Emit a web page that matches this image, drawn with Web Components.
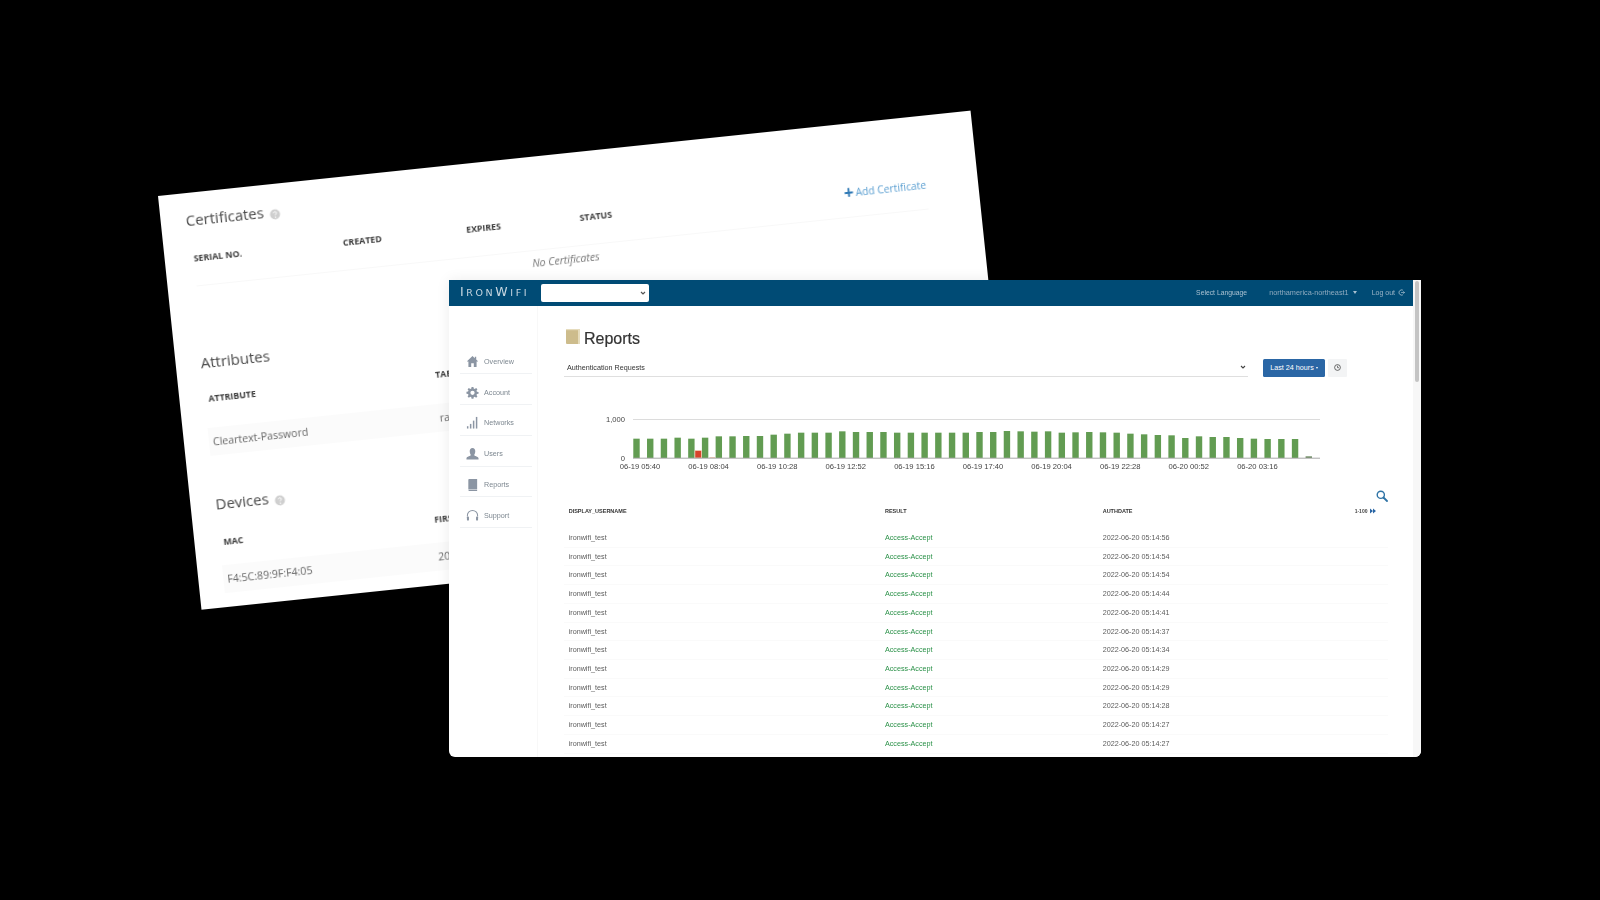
<!doctype html>
<html lang="en"><head><meta charset="utf-8"><title>IronWifi</title>
<style>html,body{margin:0;background:#000;height:100%;overflow:hidden}</style>
</head><body>
<promo-stage>
  <cert-card></cert-card>
  <app-window>
    <app-header slot="top"></app-header>
    <side-nav slot="side"></side-nav>
    <reports-page slot="main"></reports-page>
  </app-window>
</promo-stage>
<script>
const el=(name,css,html,connect)=>{customElements.define(name,class extends HTMLElement{constructor(){super();this.attachShadow({mode:'open'}).innerHTML=`<style>${css}</style>${typeof html==='function'?html():html}`;}connectedCallback(){if(connect)connect.call(this);}});};

el('promo-stage',`:host{display:block;position:relative;width:1600px;height:900px;background:#000;overflow:hidden}`,`<slot></slot>`);

const help=`<svg class="help" width="11" height="11" viewBox="0 0 11 11"><circle cx="5.5" cy="5.5" r="5" fill="#cfcfcf"/><path d="M4 4.300c.1-1 .8-1.500 1.600-1.500s1.500.6 1.500 1.300c0 1-1.400 1-1.400 2.200" fill="none" stroke="#fff" stroke-width="1"/><circle cx="5.700" cy="8.200" r=".7" fill="#fff"/></svg>`;
el('cert-card',`
:host{display:block;position:absolute;left:158px;top:196px;width:817px;height:416px;background:#fff;transform:rotate(-6deg);transform-origin:0 0;filter:blur(.45px);font-family:"Open Sans","Liberation Sans",sans-serif;color:#666;overflow:hidden;box-sizing:border-box;padding:16px 52px 0 25px}
h2{margin:0;font-size:15px;font-weight:400;line-height:22px;color:#484848;display:flex;align-items:center;gap:6px}
.help{flex:none;position:relative;top:3px}
.th{font-size:8.800px;font-weight:700;color:#3c3c3c;line-height:14px;text-transform:uppercase;white-space:nowrap}
.grid{display:grid;padding-left:4px}
.cert{grid-template-columns:150px 124px 114px 1fr;margin-top:21px;align-items:end}
.add{justify-self:end;font-size:10.300px;line-height:14px;color:#5b9fd1;position:relative;top:3px;display:flex;align-items:center;gap:2px}
.add b{font-size:17px;font-weight:700;color:#2f79b5;line-height:10px}
.rule{height:1px;background:#f8f8f8;margin:20px 0 0 4px}
.none{font-size:10.500px;font-style:italic;text-align:center;color:#777;line-height:14px;margin-top:5px;padding-left:8px}
.attr{grid-template-columns:228px 1fr;margin-top:19px}
.dev{grid-template-columns:212px 1fr;margin-top:21px}
.row{font-size:10.600px;line-height:28px;background:#fbfbfb;white-space:nowrap}
.s2{margin-top:46px}
.s3{margin-top:37px}
`,`
<h2>Certificates ${help}</h2>
<div class="grid cert"><div class="th">Serial No.</div><div class="th">Created</div><div class="th">Expires</div><div class="th" style="display:flex;justify-content:space-between"><span>Status</span><span class="add" style="text-transform:none;font-weight:400"><b>+</b>Add Certificate</span></div></div>
<div class="rule"></div>
<div class="none">No Certificates</div>
<h2 class="s2">Attributes</h2>
<div class="grid attr"><div class="th">Attribute</div><div class="th">Table</div></div>
<div class="grid attr row" style="margin-top:22px"><span>Cleartext-Password</span><span>radius</span></div>
<h2 class="s3">Devices ${help}</h2>
<div class="grid dev"><div class="th">MAC</div><div class="th">First Seen</div></div>
<div class="grid dev row" style="margin-top:16px"><span>F4:5C:89:9F:F4:05</span><span>2022-06-20</span></div>
`);

el('app-window',`
:host{display:flex;position:absolute;left:449px;top:279.500px;width:972px;height:477px;background:#fff;border-radius:0 0 6px 6px;overflow:hidden;font-family:"Liberation Sans",Arial,sans-serif;filter:blur(.4px);box-shadow:0 0 14px rgba(0,0,0,.08)}
.content{flex:1;min-width:0;display:flex;flex-direction:column}
.body{flex:1;display:flex;min-height:0}
.bar{width:8px;background:#f7f7f7;flex:none;padding:1px 2px;box-sizing:border-box}
.bar i{display:block;height:101px;background:#c4c4c4;border-radius:2px}
`,`<div class="content"><slot name="top"></slot><div class="body"><slot name="side"></slot><slot name="main"></slot></div></div><div class="bar"><i></i></div>`);

el('app-header',`
:host{display:flex;align-items:center;height:26.500px;background:#004b75;color:#a9c1d1;font-size:7px;padding:0 8px 0 11px;box-sizing:border-box;flex:none}
.logo{font-family:"DejaVu Sans","Liberation Sans",sans-serif;font-size:9.500px;letter-spacing:2.600px;color:#c9d8e2;width:81px;white-space:nowrap;line-height:1;position:relative;top:-.5px}
.logo b{font-size:12.500px;font-weight:400}
.sel{width:108px;height:17.500px;background:#fff;border-radius:2px;display:flex;align-items:center;justify-content:flex-end;padding-right:3px;box-sizing:border-box}
.sp{flex:1}
.lang{margin-right:22px;font-size:6.800px}
.reg{display:flex;align-items:center;gap:4px;margin-right:15px;font-size:7.300px;color:#8fabbf;position:relative;top:-.5px}
.reg i{width:0;height:0;border:2.500px solid transparent;border-top:3px solid #a9c1d1;border-bottom:0}
.out{display:flex;align-items:center;gap:3px;color:#9bb5c7;position:relative;top:-.5px}
`,`<span class="logo"><b>I</b>RON<b>W</b>IFI</span><span class="sel"><svg width="6" height="4" viewBox="0 0 6 4"><path d="M1 1l2 2 2-2" fill="none" stroke="#555" stroke-width="1.200"/></svg></span><span class="sp"></span>
<span class="lang">Select Language</span><span class="reg">northamerica-northeast1<i></i></span>
<span class="out">Log out<svg width="7" height="7" viewBox="0 0 8 8"><path d="M5.500 1.300A3 3 0 1 0 5.500 6.700" fill="none" stroke="#a9c1d1" stroke-width="1"/><path d="M3.500 4H7.500M6 2.700L7.500 4 6 5.300" fill="none" stroke="#a9c1d1" stroke-width=".8"/></svg></span>`);

const icons={
home:`<path d="M7 1L.8 7h1.800v6h3V9h2.800v4h3V7h1.800L11 4.800V2H9.500v1.400z"/>`,
gear:`<path fill-rule="evenodd" d="M6 1h2l.3 1.700 1.100.5L10.900 2.200 12.300 3.600 11.300 5l.5 1.100 1.700.3v2l-1.700.3-.5 1.100 1 1.500-1.400 1.400-1.500-1-1.100.5L8 13.800H6l-.3-1.700-1.100-.5-1.500 1-1.400-1.400 1-1.500-.5-1.100L.5 8.300v-2l1.700-.3.5-1.100-1-1.400L3.100 2.200l1.500 1 1.100-.5zM7 5A2.300 2.300 0 1 0 7 9.600 2.300 2.300 0 0 0 7 5z"/>`,
bars:`<rect x="1" y="11" width="1.600" height="2.500"/><rect x="4.200" y="8.500" width="1.600" height="5"/><rect x="7.400" y="5" width="1.600" height="8.500"/><rect x="10.600" y="1" width="1.600" height="12.500"/>`,
user:`<path d="M7 1c2 0 3 1.500 3 3.500S9 8 8.800 8.600c0 1 4.200 1.500 4.700 3.400v1.500H.5V12c.5-1.900 4.700-2.400 4.700-3.400C5 8 4 6.500 4 4.500S5 1 7 1z"/>`,
book:`<path d="M2.500 2C2.500 1.300 3 1 3.600 1H12v10.800H3.600c-.6 0-1.100.1-1.100 0zM2.500 12.300h9.500V14H3.600c-.6 0-1.100-.4-1.100-1z"/>`,
head:`<path d="M1.500 8V7a5.500 5.500 0 0 1 11 0v1" fill="none" stroke="#8b95a3" stroke-width="1.100"/><rect x="1" y="8" width="2.200" height="4.500" rx="1"/><rect x="10.800" y="8" width="2.200" height="4.500" rx="1"/>`};
el('nav-item',`
:host{display:flex;align-items:center;height:30.800px;box-sizing:border-box;border-bottom:1px solid #f0f2f4;font-size:7.200px;color:#7d8790;gap:5px;padding:6px 0 0 6px}
svg{width:13px;height:13px;fill:#8b95a3;flex:none}
`,`<svg viewBox="0 0 14 14"></svg><span id="t"></span>`,function(){const r=this.shadowRoot;r.querySelector('svg').innerHTML=icons[this.getAttribute('icon')];r.getElementById('t').textContent=this.getAttribute('label');});

el('side-nav',`:host{display:block;width:89px;box-sizing:border-box;padding:37.500px 5px 0 11px;border-right:1px solid #f8f8f8;flex:none}`,
`<nav-item icon="home" label="Overview"></nav-item><nav-item icon="gear" label="Account"></nav-item><nav-item icon="bars" label="Networks"></nav-item><nav-item icon="user" label="Users"></nav-item><nav-item icon="book" label="Reports"></nav-item><nav-item icon="head" label="Support"></nav-item>`);

el('reports-page',`
:host{display:block;flex:1;min-width:0;box-sizing:border-box;padding:22.500px 25px 0 26px;font-size:7.200px;color:#333;overflow:hidden}
h1{margin:0;display:flex;align-items:center;gap:4px;font-size:16px;font-weight:400;color:#333;height:20px;line-height:20px;padding-left:2px;-webkit-text-stroke:.2px #333}
h1 svg{position:relative;top:-2px}
.tools{display:flex;align-items:stretch;height:17.500px;margin-top:10.500px}
.select{width:684px;box-sizing:border-box;border-bottom:1px solid #dfdfdf;display:flex;align-items:center;justify-content:space-between;padding:0 2px 0 3px;color:#333}
.btn{margin-left:15px;width:62px;background:#2a66a5;color:#fff;border-radius:1.500px;display:flex;align-items:center;justify-content:center;gap:2px;white-space:nowrap}
.btn i{width:0;height:0;border:1.500px solid transparent;border-top:2px solid #fff;border-bottom:0}
.clock{margin-left:3px;width:19px;background:#f3f4f5;display:flex;align-items:center;justify-content:center;border-radius:1px}
`,`
<h1><svg width="14" height="15" viewBox="0 0 14 15"><rect width="14" height="15" rx="1" fill="#cdbc8c"/><rect x="12" width="2" height="15" fill="#e6dcbd"/><rect width="14" height="1.200" fill="#e6dcbd"/></svg>Reports</h1>
<div class="tools"><div class="select">Authentication Requests<svg width="6" height="4" viewBox="0 0 6 4"><path d="M1 1l2 2 2-2" fill="none" stroke="#444" stroke-width="1.100"/></svg></div>
<div class="btn">Last 24 hours <i></i></div>
<div class="clock"><svg width="7" height="7" viewBox="0 0 8 8"><circle cx="4" cy="4" r="3.300" fill="none" stroke="#444" stroke-width=".9"/><path d="M4 2v2.200h1.700" fill="none" stroke="#444" stroke-width=".8"/></svg></div></div>
<report-chart></report-chart>
<report-table></report-table>`);

const tops=[115,115,115,112,115,112,108,108,107,107,103,100,97,97,97,93,95,95,95,97,97,97,97,97,97,95,95,92,93,94,93,97,96,95,96,97,100,102,104,105,113,108,110,110,113,115,116,116,116,168];
const labels=['06-19 05:40','06-19 08:04','06-19 10:28','06-19 12:52','06-19 15:16','06-19 17:40','06-19 20:04','06-19 22:28','06-20 00:52','06-20 03:16'];
el('report-chart',`:host{display:block;margin:33px 0 0 36px;height:70px}svg{display:block;overflow:visible}text{font:7.600px "Liberation Sans",Arial,sans-serif;fill:#444}`,()=>{
 const X=v=>(v-600).toFixed(2);const base=48;
 let s=`<svg width="730" height="70" viewBox="0 0 730 70"><line x1="33" x2="720" y1="9.500" y2="9.500" stroke="#dcdcdc"/>`;
 s+=`<text x="25" y="12" text-anchor="end">1,000</text><text x="25" y="51" text-anchor="end">0</text>`;
 tops.forEach((t,i)=>{const h=(173-t)/3;s+=`<rect x="${X(633.3+i*13.72)}" y="${(base-h).toFixed(2)}" width="6.400" height="${h.toFixed(2)}" fill="${i==49?'#6d8a62':'#629c52'}"/>`;});
 s+=`<rect x="${X(695)}" y="40.700" width="6.400" height="7.300" fill="#d8432c" stroke="#f3c7a8" stroke-width=".6"/><rect x="${X(709.500)}" y="47.200" width="5.500" height=".8" fill="#eeb9a0"/>`;
 s+=`<line x1="33" x2="720" y1="48.200" y2="48.200" stroke="#a8a8a8" stroke-width="1"/>`;
 labels.forEach((l,i)=>{s+=`<text x="${X(640+i*68.6)}" y="58.500" text-anchor="middle">${l}</text>`;});
 return s+`</svg>`;
});

el('report-row',`
:host{display:grid;grid-template-columns:316.300px 217.700px 1fr;height:18.730px;line-height:18.730px;box-sizing:border-box;border-bottom:1px solid #fafafa;padding-left:4.700px;font-size:7.200px;color:#5c5c5c;white-space:nowrap}
.g{color:#2a9148}
`,`<span>ironwifi_test</span><span class="g">Access-Accept</span><span id="d"></span>`,function(){this.shadowRoot.getElementById('d').textContent=this.getAttribute('date');});

const secs=[56,54,54,44,41,37,34,29,29,28,27,27];
el('report-table',`
:host{display:block}
.find{display:flex;justify-content:flex-end;height:12px;margin-top:10px}
.head{display:grid;grid-template-columns:316.300px 217.700px 252px 1fr;padding-left:4.700px;height:14px;margin-top:2px;align-items:center;font-size:5.500px;font-weight:700;color:#333;margin-bottom:11.500px}
.pg{display:flex;align-items:center;gap:3px;font-size:5px;white-space:nowrap;color:#444}
`,()=>`
<div class="find"><svg width="12" height="12" viewBox="0 0 12 12"><circle cx="4.800" cy="4.800" r="3.600" fill="none" stroke="#2f74a6" stroke-width="1.400"/><path d="M7.500 7.500L11 11" stroke="#2f74a6" stroke-width="1.800" stroke-linecap="round"/></svg></div>
<div class="head"><span>DISPLAY_USERNAME</span><span>RESULT</span><span>AUTHDATE</span><span class="pg">1-100<svg width="6" height="6" viewBox="0 0 6 6"><path d="M0 .5L3 3 0 5.500zM3 .5L6 3 3 5.500z" fill="#2a66a5"/></svg></span></div>
${secs.map(s=>`<report-row date="2022-06-20 05:14:${s}"></report-row>`).join('')}`);
</script>
</body></html>
